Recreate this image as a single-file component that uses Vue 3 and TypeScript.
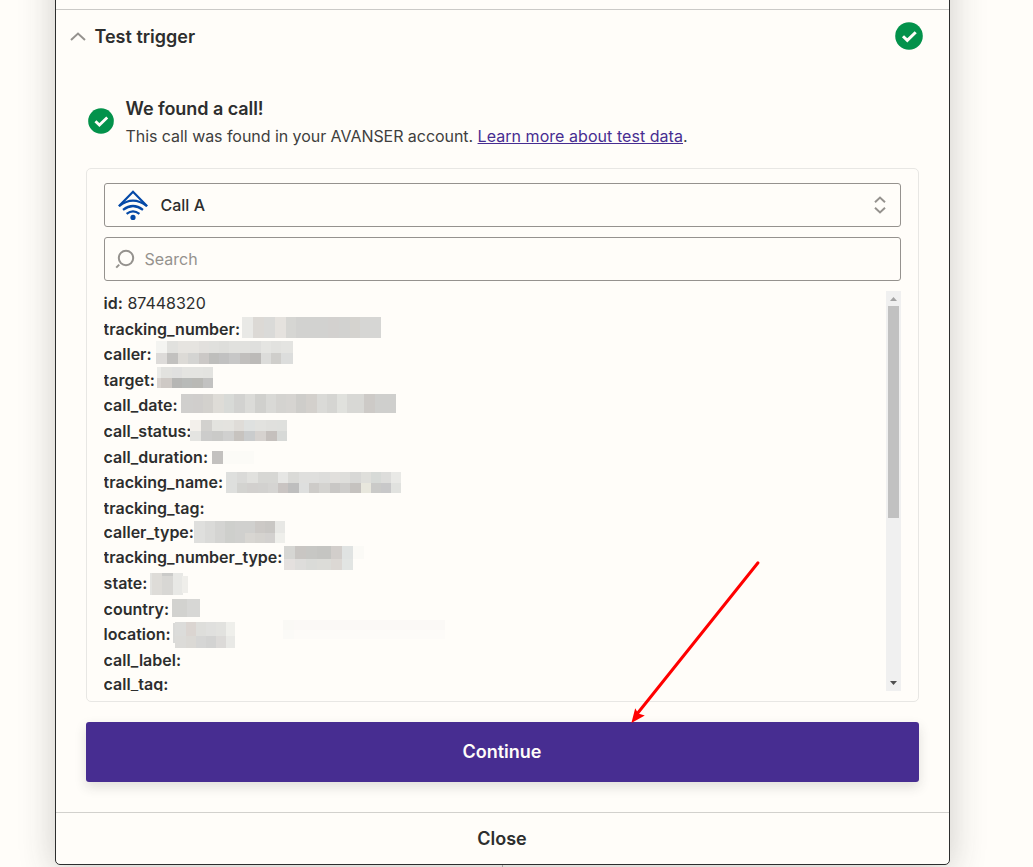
<script setup lang="ts">
interface Field {
  key: string
  value?: string
  empty?: boolean
}

interface Mosaic {
  xs: number[]
  ys: number[]
  rows: string[][]
}

const fields: Field[] = [
  { key: 'id', value: '87448320' },
  { key: 'tracking_number' },
  { key: 'caller' },
  { key: 'target' },
  { key: 'call_date' },
  { key: 'call_status' },
  { key: 'call_duration' },
  { key: 'tracking_name' },
  { key: 'tracking_tag', empty: true },
  { key: 'caller_type' },
  { key: 'tracking_number_type' },
  { key: 'state' },
  { key: 'country' },
  { key: 'location' },
  { key: 'call_label', empty: true },
  { key: 'call_tag', empty: true },
]

// Redaction blocks: column edges, row edges and one colour per cell,
// measured from the top left corner of the list.
const mosaics: Mosaic[] = [
  { xs: [138, 149, 160, 171, 182, 192, 224, 235, 246, 256, 277], ys: [26, 47],
    rows: [['#e9e9e6', '#dcd9d5', '#dadad8', '#e5e2de', '#d6d6d3', '#d2d2d0', '#d3d1cf', '#d2d2d0', '#d5d3cf', '#d6d6d4']] },
  { xs: [52, 63, 74, 84, 95, 105, 115, 125, 136, 146, 157, 167, 177, 189], ys: [50, 62, 73],
    rows: [
      ['#f4f4f1', '#e1e1de', '#e6e4e0', '#e6e4e0', '#e2e0dd', '#e0e0dd', '#dededb', '#e1e1de', '#e1e1de', '#dfdfdd', '#e5e5e2', '#e2e2df', '#e4e4e1'],
      ['#dddbd9', '#c2c1bf', '#dcdad6', '#d4d4d2', '#cbc8c6', '#bebebc', '#c1c1c1', '#c7c7c7', '#c1bfbd', '#bcbab8', '#dcdcda', '#cfcecb', '#dcdddc'],
    ] },
  { xs: [53, 57, 68, 78, 88, 99, 109], ys: [76, 87, 97],
    rows: [
      ['#ebebe8', '#e2e2df', '#e0e0df', '#e4e4e1', '#e4e4e1', '#e3e3e0'],
      ['#d8d3cf', '#cec9c5', '#b6b6b4', '#b8bab8', '#b9b9b5', '#c2c2c1'],
    ] },
  { xs: [77, 89, 99, 109, 120, 130, 141, 151, 162, 172, 182, 192, 202, 213, 223, 233, 243, 260, 271, 292], ys: [103, 122],
    rows: [['#d0cfcd', '#d0cecc', '#d3d1cd', '#dedcd7', '#d8dad7', '#d2d2d0', '#dbdbd8', '#d0d0cd', '#d9d9d6', '#d4d3d0', '#d6d4d1', '#cecdca', '#d3d0cc', '#dadad7', '#d5d5d2', '#e0e1dd', '#d8d8d5', '#cdcac7', '#cfcfcd']] },
  { xs: [86, 97, 108, 119, 130, 140, 151, 162, 173, 183], ys: [129, 140, 150],
    rows: [
      ['#f3f0eb', '#d2d1ce', '#e3e3df', '#e4e3df', '#dfdcd8', '#dfe1e0', '#e2e2df', '#e0e0dd', '#dfe0dd'],
      ['#e4e4e1', '#cccccb', '#cacac8', '#d0d0cf', '#c7c3bf', '#cacccd', '#d6d2cf', '#c5c0bd', '#d7d9d7'],
    ] },
  { xs: [108, 119, 150], ys: [160, 173], rows: [['#c3c1bf', '#fcfbf7']] },
  { xs: [122, 133, 143, 154, 164, 174, 184, 195, 205, 215, 226, 236, 246, 257, 267, 277, 287, 297], ys: [181, 192, 202],
    rows: [
      ['#dedfdd', '#dadad8', '#e1e1de', '#d7d7d4', '#d7d7d4', '#e6e6e4', '#dadad7', '#dfdfdd', '#dfdfdd', '#dddddb', '#e1dfdc', '#dededb', '#d8d8d6', '#dfdfdb', '#d7dad7', '#dddddb', '#e9e9e6'],
      ['#dedfdd', '#d3d3d0', '#d2d0ce', '#d2d1cf', '#d5d4d2', '#c9c4c2', '#bebebe', '#dedfde', '#cdcbc8', '#d4d3d0', '#c9c7c5', '#cecdcb', '#c5c2bf', '#e8e7dd', '#cacac8', '#c8c8c9', '#e1e2df'],
    ] },
  { xs: [90, 101, 111, 121, 131, 141, 151, 161, 171, 181], ys: [230, 242, 252],
    rows: [
      ['#dfdfdd', '#dadad8', '#d4d4d2', '#cecfcc', '#d0d0ce', '#d0d0ce', '#ccc9c6', '#c9c7c4', '#e8e8e5'],
      ['#dfdfdd', '#dadad8', '#d4d4d2', '#cecfcc', '#d0d0ce', '#d8d6d2', '#d5d3cf', '#d3d1cf', '#efefeb'],
    ] },
  { xs: [180, 191, 202, 213, 227, 238, 249, 260], ys: [255, 268, 279],
    rows: [
      ['#d6d6d3', '#c9c6c3', '#c7c7c4', '#c5c5c2', '#d2cecb', '#e0e3e2', '#fbfaf6'],
      ['#e4e0de', '#dedddb', '#dadbd8', '#dcdcd8', '#dcd8d4', '#e2e5e3', '#fffdf9'],
    ] },
  { xs: [46, 48, 58, 69, 79], ys: [282, 304], rows: [['#e3e3e0', '#dedcd8', '#d8d7d4', '#e8e8e5']] },
  { xs: [58, 69], ys: [282, 285], rows: [['#cbcbc9']] },
  { xs: [78, 84], ys: [285, 302], rows: [['#efeeea']] },
  { xs: [68, 83, 96], ys: [308, 326], rows: [['#d2d2cf', '#d7d7d5']] },
  { xs: [69, 71], ys: [332, 352], rows: [['#dadad8']] },
  { xs: [71, 82, 92, 102, 112, 122, 131], ys: [331, 345, 357],
    rows: [
      ['#dcdcda', '#dbd5d1', '#dededb', '#e0e0de', '#e2e2df', '#efefeb'],
      ['#dcdbd8', '#dbd9d5', '#d6d6d5', '#d3d3d2', '#dcdad8', '#e9e9e6'],
    ] },
  { xs: [179, 190, 341], ys: [329, 339, 348],
    rows: [['#faf9f5', '#fbf9f6'], ['#fbfaf7', '#fdfbf8']] },
]

const cells = mosaics.flatMap((m) =>
  m.rows.flatMap((row, r) =>
    row.map((fill, c) => ({
      x: m.xs[c],
      y: m.ys[r],
      w: m.xs[c + 1] - m.xs[c],
      h: m.ys[r + 1] - m.ys[r],
      fill,
    })),
  ),
)
</script>

<template>
  <div class="page">
    <section class="card">
      <header class="head">
        <svg class="chevron" width="16" height="10" viewBox="0 0 16 10"><path d="M1 7.9 8 1.5l7 6.4" /></svg>
        <h2>Test trigger</h2>
        <svg class="ok" width="28" height="28" viewBox="0 0 28 28">
          <circle cx="14" cy="14" r="13.8" /><path d="m8 14.2 4.3 4.2 8.4-8.2" />
        </svg>
      </header>

      <div class="found">
        <svg class="ok" width="26" height="26" viewBox="0 0 28 28">
          <circle cx="14" cy="14" r="13.8" /><path d="m8 14.2 4.3 4.2 8.4-8.2" />
        </svg>
        <div class="message">
          <h3>We found a call!</h3>
          <p>This call was found in your AVANSER account. <a>Learn more about test data</a>.</p>
        </div>
      </div>

      <div class="panel">
        <div class="box">
          <svg class="logo" width="32" height="32" viewBox="0 0 32 32">
            <path d="M1.8 17.2 16 2.8l14.2 14.4" />
            <path d="M2.4 17Q16 6.4 29.6 17M6 20.8Q16 13.2 26 20.8M9.6 24.9q6.4-4.9 12.8 0" />
            <circle cx="16" cy="28.4" r="2.6" />
          </svg>
          <span class="choice">Call A</span>
          <svg class="sort" width="12" height="18" viewBox="0 0 12 18"><path d="M1 6.2 6 1.6l5 4.6M1 11.8l5 4.6 5-4.6" /></svg>
        </div>
        <div class="box search">
          <svg class="lens" width="20" height="20" viewBox="0 0 20 20"><circle cx="11" cy="9" r="7.2" /><path d="m1.2 18.6 3-3" /></svg>
          <span>Search</span>
        </div>
        <div class="scroller">
          <div class="list">
            <div v-for="f in fields" :key="f.key" class="row" :class="{ empty: f.empty }">
              <b>{{ f.key }}:</b><span v-if="f.value" class="value">{{ f.value }}</span>
            </div>
            <svg class="redaction" width="345" height="400" viewBox="0 0 345 400" shape-rendering="crispEdges">
              <rect v-for="(c, i) in cells" :key="i" :x="c.x" :y="c.y" :width="c.w" :height="c.h" :fill="c.fill" />
            </svg>
          </div>
          <div class="bar">
            <svg width="15" height="15" viewBox="0 0 15 15"><path d="M4 10 7.5 6l3.5 4z" fill="#a3a3a3" /></svg>
            <div class="thumb"></div>
            <svg class="down" width="15" height="15" viewBox="0 0 15 15"><path d="M4 5h7L7.5 9z" fill="#505050" /></svg>
          </div>
        </div>
      </div>

      <button class="continue">Continue</button>
      <button class="close">Close</button>
    </section>
    <div class="connector"></div>
    <svg class="arrow" width="150" height="180" viewBox="0 0 150 180">
      <path d="M138 12.8 17 164" />
      <polygon points="11.4,173 15.2,158.2 18.2,163.4 24.8,165.4" />
    </svg>
  </div>
</template>

<style>
body {
  background: #fffdf9;
}
</style>

<style scoped>
.page {
  position: relative;
  height: 867px;
  overflow: hidden;
  background: #fffdf9;
  color: #2d2e2e;
  font-family: Inter, "Liberation Sans", sans-serif;
  font-size: 16px;
}
.card {
  box-sizing: border-box;
  width: 895px;
  height: 925px;
  margin: -60px 0 0 55px;
  padding-top: 68px;
  border: 1px solid #2d2e2e;
  border-radius: 5px;
  background: #fffdf9;
  box-shadow: 0 6px 36px rgba(45, 46, 46, 0.24);
}
.head {
  display: flex;
  align-items: center;
  height: 53px;
  padding: 0 26.5px 0 14px;
  border-top: 1px solid #cbcac7;
}
.head h2 {
  flex: 1;
  margin: 0 0 0 8.5px;
  font-size: 18px;
  font-weight: 600;
}
.head .ok {
  margin-bottom: 1px;
}
.chevron {
  fill: none;
  stroke: #95928e;
  stroke-width: 2;
}
.ok {
  fill: #03924b;
}
.ok path {
  fill: none;
  stroke: #fffdf9;
  stroke-width: 3;
}
.found {
  display: flex;
  align-items: center;
  gap: 11.5px;
  height: 56px;
  margin: 30px 0 0 32px;
}
.message {
  padding-top: 3px;
}
.found h3 {
  margin: 0;
  font-size: 18px;
  font-weight: 600;
  letter-spacing: -0.06px;
  line-height: 28px;
}
.found p {
  margin: 0;
  color: #403f3e;
  letter-spacing: -0.05px;
  line-height: 27px;
}
.found a {
  color: #472d91;
  letter-spacing: 0.05px;
  text-decoration: underline;
}
.panel {
  box-sizing: border-box;
  display: flex;
  flex-direction: column;
  gap: 10px;
  width: 833px;
  height: 534px;
  margin: 19px 0 0 30px;
  padding: 14px 17px 0;
  border: 1px solid #e8e7e4;
  border-radius: 5px;
}
.box {
  box-sizing: border-box;
  display: flex;
  flex: none;
  align-items: center;
  height: 44px;
  padding: 0 14px 0 12px;
  border: 1px solid #95928e;
  border-radius: 3px;
}
.logo {
  fill: none;
  stroke: #0549a7;
  stroke-width: 2.2;
}
.logo circle {
  fill: #0549a7;
  stroke: none;
}
.choice {
  flex: 1;
  margin-left: 11.5px;
  font-weight: 500;
}
.sort,
.lens {
  fill: none;
  stroke: #95928e;
  stroke-width: 2;
}
.search {
  padding-left: 10px;
  color: #95928e;
}
.search span {
  margin-left: 9.5px;
}
.scroller {
  display: flex;
  height: 400px;
}
.list {
  position: relative;
  flex: 1;
  overflow: hidden;
}
.row {
  height: 25.6px;
  margin-left: -0.4px;
  line-height: 25px;
}
.row.empty {
  height: 24px;
}
.row b {
  font-weight: 600;
}
.value {
  margin-left: 4.5px;
}
.redaction {
  position: absolute;
  top: 0;
  left: 0;
}
.bar {
  display: flex;
  flex-direction: column;
  width: 15px;
  background: #f0f0f0;
}
.thumb {
  width: 11px;
  height: 212px;
  margin: 0 2px;
  background: #c1c1c1;
}
.down {
  margin-top: auto;
}
button {
  display: block;
  font: 600 18px Inter, "Liberation Sans", sans-serif;
}
.continue {
  width: 833px;
  height: 60px;
  margin: 20px 0 30px 30px;
  padding: 0 1px 2px 0;
  border: 0;
  border-radius: 3px;
  background: #472d91;
  box-shadow: 0 5px 12px rgba(45, 46, 46, 0.15);
  color: #fffdf9;
}
.close {
  width: 100%;
  height: 52px;
  padding: 0 1px 0 0;
  border: 0;
  border-top: 1px solid #d2d1cd;
  border-radius: 0 0 4px 4px;
  background: transparent;
  color: #2d2e2e;
}
.connector {
  width: 1px;
  height: 2px;
  margin-left: 502px;
  background: #a7a6a4;
}
.arrow {
  position: absolute;
  top: 550px;
  left: 620px;
  fill: #f00;
}
.arrow path {
  fill: none;
  stroke: #f00;
  stroke-width: 3;
  stroke-linecap: round;
}
</style>
